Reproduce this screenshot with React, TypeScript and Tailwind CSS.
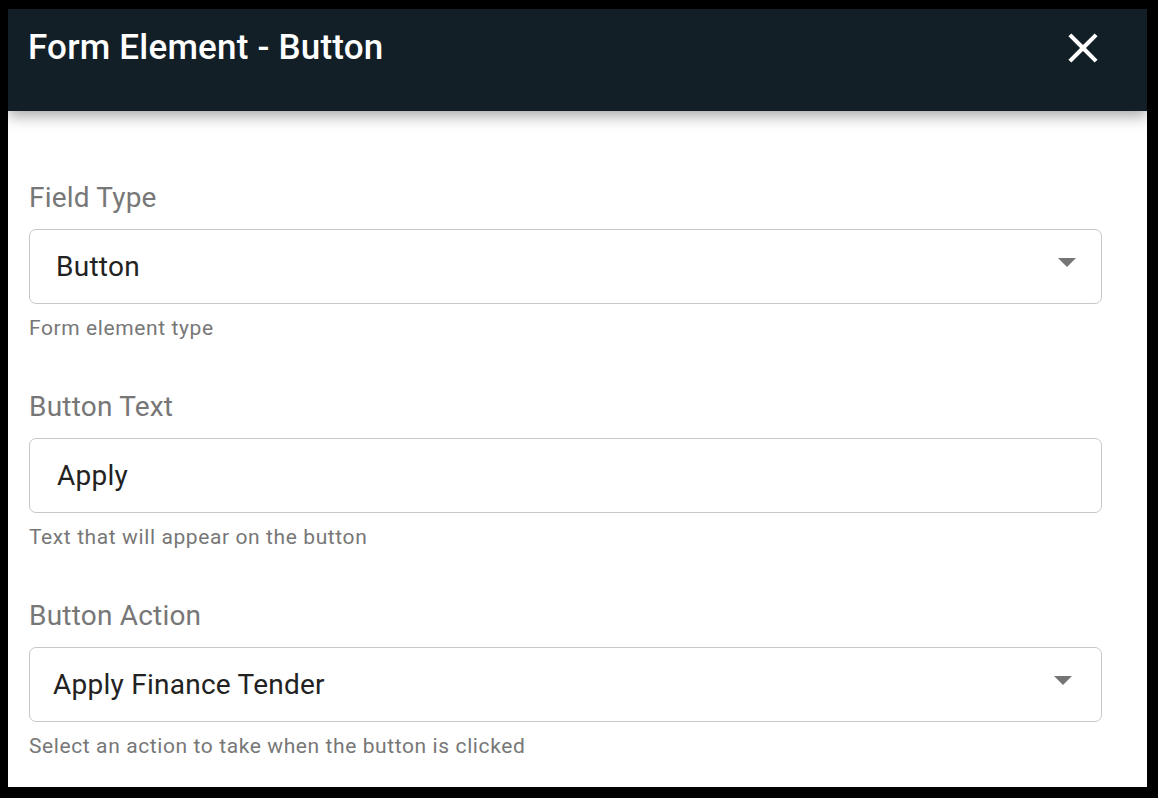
import React from "react";

const font = { fontFamily: "Roboto, 'Noto Sans', Arial, sans-serif" };

function Arrow() {
  return (
    <svg width="18" height="9" viewBox="0 0 18 9" className="shrink-0">
      <path d="M0 0 L18 0 L9 9 Z" fill="#757575" />
    </svg>
  );
}

function Field({
  label,
  value,
  helper,
  select,
  textPad,
  arrowPad,
  last,
}: {
  label: string;
  value: string;
  helper: string;
  select?: boolean;
  textPad: string;
  arrowPad: string;
  last?: boolean;
}) {
  return (
    <div className={last ? "flex flex-col" : "flex flex-col mb-[51px]"}>
      <div className="h-[32px] leading-[32px] text-[28px] text-[#777777] tracking-[0.2px]">
        {label}
      </div>
      <div
        className={`mt-[15px] h-[75px] rounded-[7px] border border-[#c8c8c8] flex items-center justify-between ${arrowPad} ${textPad}`}
      >
        <span className="text-[28px] text-[#222222] tracking-[0.25px]">{value}</span>
        {select ? (
          <div className="-mt-[8px]">
            <Arrow />
          </div>
        ) : null}
      </div>
      <div className="mt-[12px] h-[24px] leading-[24px] text-[21px] text-[#777777] tracking-[0.6px]">
        {helper}
      </div>
    </div>
  );
}

export default function App() {
  return (
    <div className="w-[1158px] h-[798px] bg-black pl-[8px] pt-[9px] pr-[11px] pb-[11px]" style={font}>
      <div className="w-full h-full bg-white flex flex-col overflow-hidden">
        <div className="relative z-10 h-[102px] bg-[#131f27] shadow-[0_5px_14px_rgba(0,0,0,0.35)] flex items-start justify-between pl-[20px] pr-[39px]">
          <div className="mt-[19px] text-[35px] leading-[40px] font-medium text-white tracking-[0.2px]">
            Form Element - Button
          </div>
          <svg width="50" height="50" viewBox="0 0 24 24" className="mt-[14px]">
            <path
              fill="#ffffff"
              d="M19 6.41L17.59 5 12 10.59 6.41 5 5 6.41 10.59 12 5 17.59 6.41 19 12 13.41 17.59 19 19 17.59 13.41 12z"
            />
          </svg>
        </div>
        <div className="flex flex-col pt-[71px] pl-[21px] pr-[45px]">
          <Field label="Field Type" value="Button" helper="Form element type" select textPad="pl-[26px]" arrowPad="pr-[25px]" />
          <Field label="Button Text" value="Apply" helper="Text that will appear on the button" textPad="pl-[27px]" arrowPad="pr-[25px]" />
          <Field
            label="Button Action"
            value="Apply Finance Tender"
            helper="Select an action to take when the button is clicked"
            select
            textPad="pl-[23px]"
            arrowPad="pr-[29px]"
            last
          />
        </div>
      </div>
    </div>
  );
}
